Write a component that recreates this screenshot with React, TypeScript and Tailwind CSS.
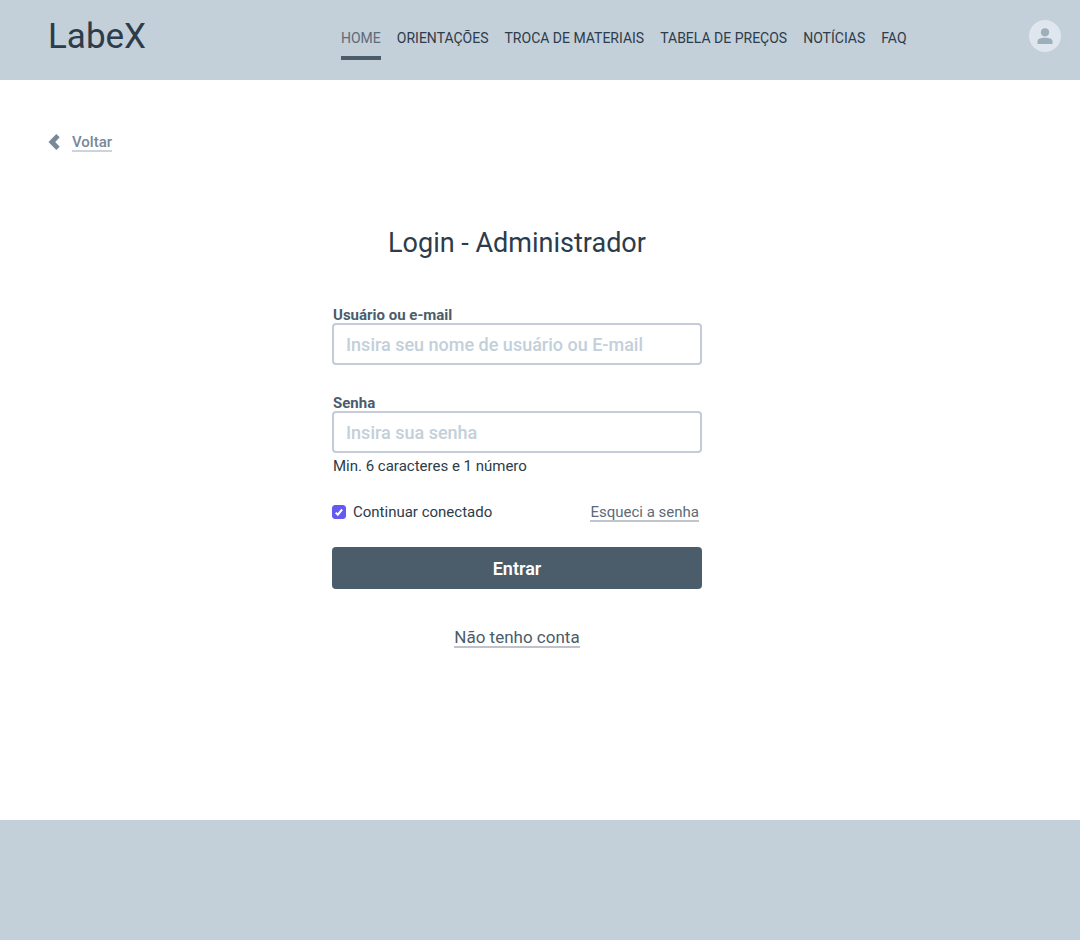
import React from "react";

const pages = ["HOME", "ORIENTAÇÕES", "TROCA DE MATERIAIS", "TABELA DE PREÇOS", "NOTÍCIAS", "FAQ"];

function Header() {
  return (
    <header className="flex h-20 items-start bg-[#c3cfd9] pr-[19px] pl-12 text-[#2c3c4a]">
      <div className="w-[293px] shrink-0 pt-3.5">
        <a href="#inicio" className="text-[35px] leading-[46px]">
          LabeX
        </a>
      </div>
      <nav aria-label="Principal" className="flex gap-4 pt-7 text-sm leading-5 whitespace-nowrap">
        {pages.map((page, index) => (
          <a
            key={page}
            href="#pagina"
            aria-current={index === 0 ? "page" : undefined}
            className={index === 0 ? "border-b-4 border-[#4b5c6b] pb-2 text-[#5b6b79]" : "pb-3"}
          >
            {page}
          </a>
        ))}
      </nav>
      <button type="button" aria-label="Conta" className="mt-5 ml-auto flex size-8 shrink-0 items-center justify-center rounded-full bg-[#dfe6ed]">
        <svg viewBox="0 0 16 16" className="size-4 fill-[#9dafba]" aria-hidden="true">
          <circle cx="8" cy="4.3" r="4.1" />
          <path d="M.5 16v-2.6C.5 10.6 4 9.8 8 9.8s7.5.8 7.5 3.6V16z" />
        </svg>
      </button>
    </header>
  );
}

function LoginForm() {
  return (
    <form className="flex w-full max-w-[370px] flex-col" onSubmit={(event) => event.preventDefault()}>
      <h1 className="text-center text-[27px] leading-[38px] text-[#2c3c4a]">Login - Administrador</h1>

      <label htmlFor="usuario" className="mt-[45px] pl-px text-[15px] leading-4 font-bold text-[#4b5c6b]">
        Usuário ou e-mail
      </label>
      <input
        id="usuario"
        type="text"
        placeholder="Insira seu nome de usuário ou E-mail"
        className="h-[42px] rounded border-2 border-[#c3ccd8] px-3 text-lg font-medium text-[#2c3c4a] placeholder:text-[#c3cfd9]"
      />

      <label htmlFor="senha" className="mt-[30px] pl-px text-[15px] leading-4 font-bold text-[#4b5c6b]">
        Senha
      </label>
      <input
        id="senha"
        type="password"
        placeholder="Insira sua senha"
        aria-describedby="senha-ajuda"
        className="h-[42px] rounded border-2 border-[#c3ccd8] px-3 text-lg font-medium text-[#2c3c4a] placeholder:text-[#c3cfd9]"
      />
      <p id="senha-ajuda" className="mt-[3px] pl-px text-[15px] leading-5 text-[#2c3c4a]">
        Min. 6 caracteres e 1 número
      </p>

      <div className="mt-[26px] flex items-start justify-between pr-[3px] text-[15px] leading-5">
        <label htmlFor="conectado" className="flex items-center gap-[7px] text-[#2c3c4a]">
          <span className="grid size-3.5">
            <input
              id="conectado"
              type="checkbox"
              defaultChecked
              className="peer col-start-1 row-start-1 size-3.5 appearance-none rounded-[3px] border border-[#6558f5] checked:bg-[#6558f5]"
            />
            <svg
              viewBox="0 0 14 14"
              aria-hidden="true"
              className="pointer-events-none invisible col-start-1 row-start-1 size-3.5 fill-none stroke-white stroke-2 peer-checked:visible"
            >
              <path d="M3.7 7.6l2.1 2.1 4.3-5.2" />
            </svg>
          </span>
          Continuar conectado
        </label>
        <a href="#recuperar" className="border-b-2 border-[#bfc5cd] pt-0.5 leading-4 text-[#5b6b79]">
          Esqueci a senha
        </a>
      </div>

      <button type="submit" className="mt-[25px] h-[42px] rounded bg-[#4b5c6a] pt-0.5 text-lg font-semibold text-white">
        Entrar
      </button>
      <a href="#cadastro" className="mt-[37px] self-center border-b-2 border-[#bfc2cd] pt-0.5 text-[17px] leading-[18px] text-[#4b5c6b]">
        Não tenho conta
      </a>
    </form>
  );
}

export default function App() {
  return (
    <div className="flex min-h-screen flex-col bg-white font-['Roboto',sans-serif]">
      <Header />
      <main className="flex grow flex-col pt-[52px] pr-[46px]">
        <a href="#voltar" className="ml-12 flex items-center gap-3 self-start text-[15px] font-medium text-[#778899]">
          <svg viewBox="0 0 12 18" className="h-[18px] w-3" aria-hidden="true">
            <path d="M.5 9L8.3 1l3.4 3.3L7.2 9l4.5 4.7L8.3 17z" fill="currentColor" />
          </svg>
          <span className="border-b-2 border-[#cdd3da] pt-0.5 leading-4">Voltar</span>
        </a>
        <div className="mt-[72px] flex justify-center pb-[172px]">
          <LoginForm />
        </div>
      </main>
      <footer className="h-[120px] bg-[#c3cfd9]" />
    </div>
  );
}
